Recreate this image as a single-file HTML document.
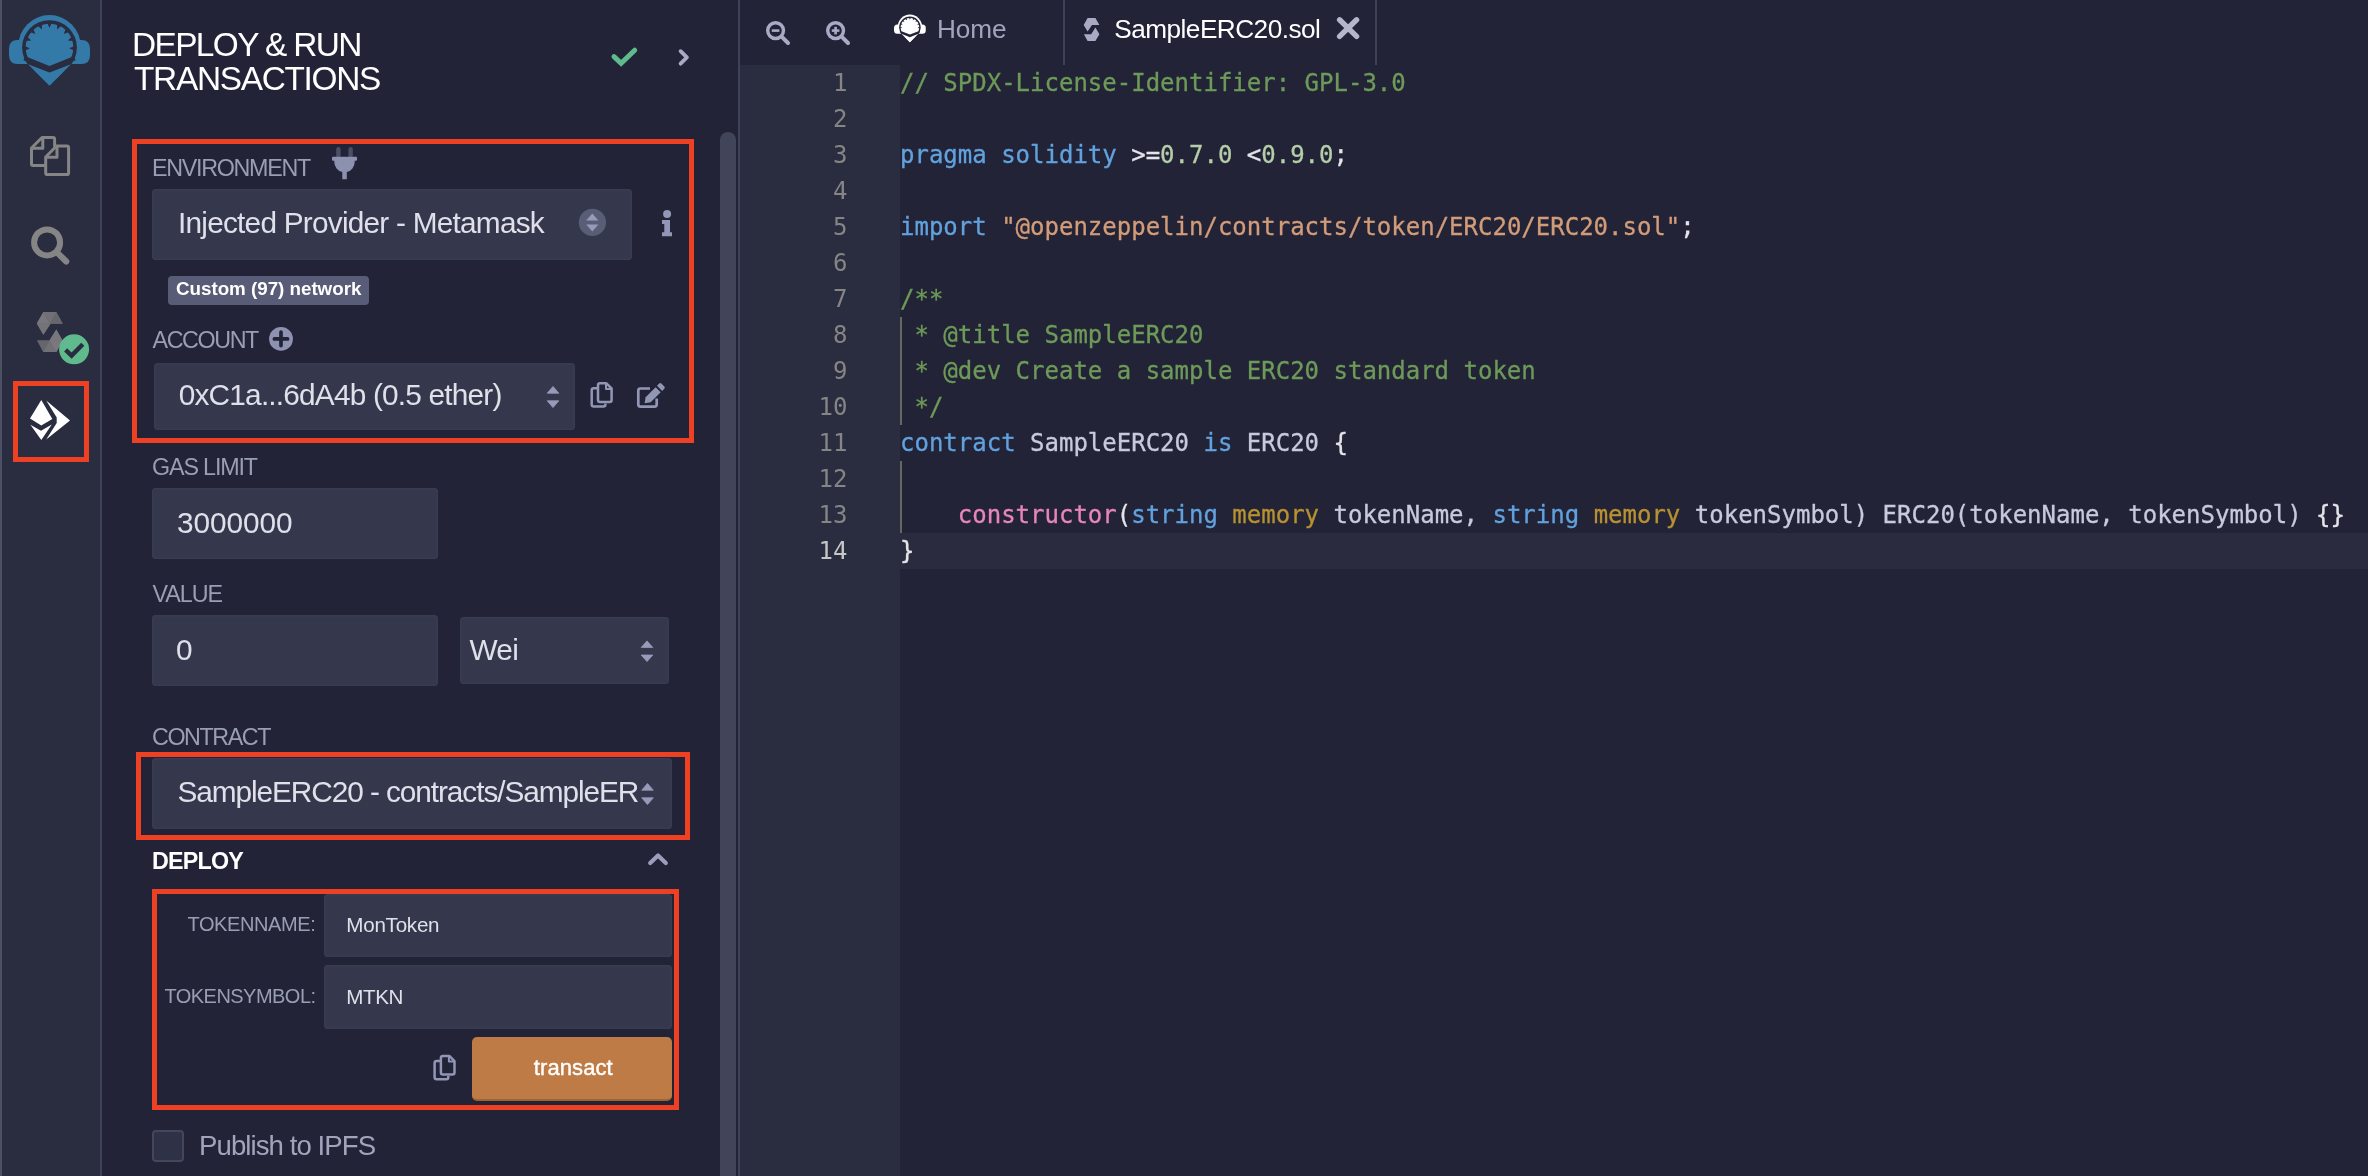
<!DOCTYPE html>
<html lang="en"><head><meta charset="utf-8"><title>Remix - Ethereum IDE</title>
<style>html,body{margin:0;padding:0}body{width:2368px;height:1176px;overflow:hidden;position:relative;background:#222336;}div,svg{box-sizing:content-box}#root{position:absolute;left:0;top:0;width:2368px;height:1176px;overflow:hidden;will-change:transform;-webkit-font-smoothing:antialiased}</style></head><body><div id="root">
<div style="position:absolute;left:0px;top:0px;width:2px;height:1176px;background:#4d4f62;"></div>
<div style="position:absolute;left:2px;top:0px;width:98px;height:1176px;background:#2a2c3f;"></div>
<div style="position:absolute;left:100px;top:0px;width:2px;height:1176px;background:#3e4257;"></div>
<div style="position:absolute;left:738px;top:0px;width:2px;height:1176px;background:#3e4257;"></div>
<div style="position:absolute;left:740px;top:65px;width:160px;height:1111px;background:#2a2c3f;"></div>
<div style="position:absolute;left:900px;top:533px;width:1468px;height:36px;background:#2a2b3f;"></div>
<svg style="position:absolute;left:0px;top:0px" width="102" height="480" viewBox="0 0 102 480"><clipPath id="hb"><rect x="0" y="0" width="100" height="56"/></clipPath><circle cx="49.5" cy="46.3" r="31.2" fill="#347aa8" clip-path="url(#hb)"/><path d="M25.5 40 H17.5 Q9 40 9 49 V55 Q9 64 17.5 64 H27 Z" fill="#347aa8"/><path d="M73.5 40 H81.5 Q90 40 90 49 V55 Q90 64 81.5 64 H72 Z" fill="#347aa8"/><path d="M26 62 L73 62 L49.5 85.4 Z" fill="#347aa8"/><circle cx="49.5" cy="47.6" r="27.4" fill="#2a2c3f"/><path d="M24.5 57.6 L49.5 68.2 L74.5 57.6" fill="none" stroke="#2a2c3f" stroke-width="5.6"/><path d="M28 64.2 L49.5 72.6 L71 64.2 L49.5 85.4 Z" fill="#347aa8"/><path d="M27.8 57.3 A23.8 23.8 0 1 1 71.2 57.3 L49.5 66 Z" fill="#347aa8"/><path d="M29.8 48.3 L25.1 46.3 L25.3 50.6 Z M31.1 40.5 L27.6 36.9 L26.0 40.9 Z M35.3 33.9 L33.5 29.2 L30.5 32.2 Z M41.8 29.5 L42.0 24.4 L38.0 26.1 Z M49.5 27.9 L51.6 23.3 L47.4 23.3 Z M57.2 29.5 L61.0 26.1 L57.0 24.4 Z M63.7 33.9 L68.5 32.2 L65.5 29.2 Z M67.9 40.5 L73.0 40.9 L71.4 36.9 Z M69.2 48.3 L73.7 50.6 L73.9 46.3 Z" fill="#2a2c3f"/><g fill="none" stroke="#858585" stroke-width="3" stroke-linejoin="round" stroke-linecap="round"><path d="M45 165.5 H33 Q31.5 165.5 31.5 164 V148 L42 137.5 H53 Q54.6 137.5 54.6 139 V146"/><path d="M42.8 138 V148.3 H32"/><path d="M56.5 146 H67 Q68.6 146 68.6 147.5 V173 Q68.6 174.6 67 174.6 H47.3 Q45.7 174.6 45.7 173 V157 Z"/><path d="M57 146.5 V157.2 H46.2"/></g><circle cx="47.1" cy="242.4" r="13" fill="none" stroke="#858585" stroke-width="6"/><path d="M57.2 252.6 L66.2 261.5" stroke="#858585" stroke-width="6.2" stroke-linecap="round"/><polygon points="43.3,312 56.3,312 62.8,323.7 50.6,323.7 43.3,334.8 36.8,323.4" fill="#6c6c72"/><polygon points="43.3,312 49.8,323.7 36.8,323.4" fill="#77777c"/><polygon points="43.3,312 56.3,312 49.8,323.7" fill="#707075"/><polygon points="56.3,312 62.8,323.7 49.8,323.7" fill="#66666b"/><polygon points="36.8,323.4 50.6,323.7 43.3,334.8" fill="#737378"/><polygon points="56.3,329.4 62.8,340.9 56.3,352 43.3,352 37.2,340.5 49.4,340.5" fill="#6c6c72"/><polygon points="56.3,329.4 62.8,340.9 49.4,340.5" fill="#77777c"/><polygon points="37.2,340.5 49.8,340.6 43.3,352" fill="#65656a"/><polygon points="49.8,340.6 56.3,352 43.3,352" fill="#707075"/><polygon points="49.8,340.6 62.8,340.9 56.3,352" fill="#78787d"/><circle cx="74.1" cy="349.3" r="15" fill="#5fba8d"/><path d="M65.6 349.9 L71.6 355.6 L82.8 344.3" fill="none" stroke="#2a2c3f" stroke-width="4.4"/><polygon points="41.3,400 52.3,419 41.3,425.5 30,418.6" fill="#fff"/><polygon points="30.4,424.7 41,430.8 51.8,424.4 41.3,440" fill="#fff"/><polygon points="46.2,400.4 70,420.4 46.2,439.6 56.7,423 56.7,417.6" fill="#fff"/></svg>
<div style="position:absolute;left:13px;top:381px;width:66px;height:71px;border:5px solid #ee4124;"></div>
<div style="position:absolute;left:132px;top:27.73px;font:400 33.4px/33.4px 'Liberation Sans', sans-serif;color:#fff;letter-spacing:-1.6px;white-space:pre;">DEPLOY &amp; RUN</div>
<div style="position:absolute;left:134px;top:62.23px;font:400 33.4px/33.4px 'Liberation Sans', sans-serif;color:#fff;letter-spacing:-1.3px;white-space:pre;">TRANSACTIONS</div>
<div style="position:absolute;left:720px;top:132px;width:16px;height:1068px;background:#424459;border-radius:8px;"></div>
<div style="position:absolute;left:132px;top:139px;width:552px;height:294px;border:5px solid #ee4124;"></div>
<div style="position:absolute;left:152px;top:156.68px;font:400 23.3px/23.3px 'Liberation Sans', sans-serif;color:#9a9eb4;letter-spacing:-1.29px;white-space:pre;">ENVIRONMENT</div>
<div style="position:absolute;left:152px;top:189px;width:480px;height:71px;background:#35384c;border-radius:4px;box-shadow:inset 0 0 0 1.5px #393c51;"></div>
<div style="position:absolute;left:178px;top:208.37px;font:400 29.8px/29.8px 'Liberation Sans', sans-serif;color:#dfe0ea;letter-spacing:-0.77px;white-space:pre;">Injected Provider - Metamask</div>
<div style="position:absolute;left:168px;top:276px;width:201px;height:28.5px;background:#595c76;border-radius:4px;"></div>
<div style="position:absolute;left:176px;top:280.49px;font:700 18.8px/18.8px 'Liberation Sans', sans-serif;color:#fff;letter-spacing:-0.02px;white-space:pre;">Custom (97) network</div>
<div style="position:absolute;left:152.5px;top:328.88px;font:400 23.3px/23.3px 'Liberation Sans', sans-serif;color:#9a9eb4;letter-spacing:-1.39px;white-space:pre;">ACCOUNT</div>
<div style="position:absolute;left:154px;top:363px;width:421px;height:66.5px;background:#35384c;border-radius:4px;box-shadow:inset 0 0 0 1.5px #393c51;"></div>
<div style="position:absolute;left:178.75px;top:379.77px;font:400 29.8px/29.8px 'Liberation Sans', sans-serif;color:#dfe0ea;letter-spacing:-0.8px;white-space:pre;">0xC1a...6dA4b (0.5 ether)</div>
<div style="position:absolute;left:152px;top:456.38px;font:400 23.3px/23.3px 'Liberation Sans', sans-serif;color:#9a9eb4;letter-spacing:-1.14px;white-space:pre;">GAS LIMIT</div>
<div style="position:absolute;left:152px;top:488px;width:286px;height:71px;background:#35384c;border-radius:4px;box-shadow:inset 0 0 0 1.5px #393c51;"></div>
<div style="position:absolute;left:177px;top:507.77px;font:400 29.8px/29.8px 'Liberation Sans', sans-serif;color:#dfe0ea;letter-spacing:-0.07px;white-space:pre;">3000000</div>
<div style="position:absolute;left:152.5px;top:582.88px;font:400 23.3px/23.3px 'Liberation Sans', sans-serif;color:#9a9eb4;letter-spacing:-1.03px;white-space:pre;">VALUE</div>
<div style="position:absolute;left:152px;top:615px;width:286px;height:70.5px;background:#35384c;border-radius:4px;box-shadow:inset 0 0 0 1.5px #393c51;"></div>
<div style="position:absolute;left:176px;top:634.77px;font:400 29.8px/29.8px 'Liberation Sans', sans-serif;color:#dfe0ea;letter-spacing:0px;white-space:pre;">0</div>
<div style="position:absolute;left:460px;top:617px;width:209px;height:67px;background:#35384c;border-radius:4px;box-shadow:inset 0 0 0 1.5px #393c51;"></div>
<div style="position:absolute;left:469.5px;top:634.77px;font:400 29.8px/29.8px 'Liberation Sans', sans-serif;color:#dfe0ea;letter-spacing:-0.76px;white-space:pre;">Wei</div>
<div style="position:absolute;left:152px;top:725.88px;font:400 23.3px/23.3px 'Liberation Sans', sans-serif;color:#9a9eb4;letter-spacing:-1.43px;white-space:pre;">CONTRACT</div>
<div style="position:absolute;left:136px;top:752px;width:544px;height:78px;border:5px solid #ee4124;"></div>
<div style="position:absolute;left:152px;top:758px;width:520px;height:71px;background:#35384c;border-radius:4px;box-shadow:inset 0 0 0 1.5px #393c51;"></div>
<div style="position:absolute;left:177.4px;top:777.37px;font:400 29.8px/29.8px 'Liberation Sans', sans-serif;color:#dfe0ea;letter-spacing:-1.07px;white-space:pre;">SampleERC20 - contracts/SampleER</div>
<div style="position:absolute;left:152px;top:849.58px;font:700 23.3px/23.3px 'Liberation Sans', sans-serif;color:#fff;letter-spacing:-0.8px;white-space:pre;">DEPLOY</div>
<div style="position:absolute;left:152px;top:889px;width:517px;height:211px;border:5px solid #ee4124;"></div>
<div style="position:absolute;right:2052.5px;top:913.77px;font:400 20px/20px 'Liberation Sans', sans-serif;color:#9a9eb4;letter-spacing:-0.38px;white-space:pre;">TOKENNAME:</div>
<div style="position:absolute;left:324px;top:894px;width:348px;height:63px;background:#35384c;border-radius:4px;box-shadow:inset 0 0 0 1.5px #393c51;"></div>
<div style="position:absolute;left:346.3px;top:914.56px;font:400 20.6px/20.6px 'Liberation Sans', sans-serif;color:#dfe0ea;letter-spacing:-0.25px;white-space:pre;">MonToken</div>
<div style="position:absolute;right:2052.5px;top:986.07px;font:400 20px/20px 'Liberation Sans', sans-serif;color:#9a9eb4;letter-spacing:-0.53px;white-space:pre;">TOKENSYMBOL:</div>
<div style="position:absolute;left:324px;top:965px;width:348px;height:64px;background:#35384c;border-radius:4px;box-shadow:inset 0 0 0 1.5px #393c51;"></div>
<div style="position:absolute;left:346.3px;top:986.56px;font:400 20.6px/20.6px 'Liberation Sans', sans-serif;color:#dfe0ea;letter-spacing:-0.45px;white-space:pre;">MTKN</div>
<div style="position:absolute;left:472px;top:1037px;width:200px;height:61.5px;background:#bf7b46;border-radius:5px;border-bottom:2px solid #a2622f;"></div>
<div style="position:absolute;left:533.8px;top:1057.38px;font:400 22px/22px 'Liberation Sans', sans-serif;color:#fff;letter-spacing:0.09px;white-space:pre;-webkit-text-stroke:0.4px #fff;">transact</div>
<div style="position:absolute;left:152px;top:1130px;width:28px;height:28px;border:2px solid #44475c;border-radius:4px;background:#2f3146"></div>
<div style="position:absolute;left:199px;top:1132.04px;font:400 27.6px/27.6px 'Liberation Sans', sans-serif;color:#a2a3bd;letter-spacing:-0.93px;white-space:pre;">Publish to IPFS</div>
<svg style="position:absolute;left:100px;top:0px" width="640" height="1176" viewBox="100 0 640 1176"><path d="M614 56.6 L621.1 63.4 L634.7 50.2" fill="none" stroke="#5fba8d" stroke-width="5" stroke-linecap="round" stroke-linejoin="miter"/><path d="M680.6 51.2 L686.9 57.4 L680.6 63.7" fill="none" stroke="#a9abc6" stroke-width="3.8" stroke-linecap="round" stroke-linejoin="round"/><rect x="336.2" y="147" width="4.4" height="11" rx="2.2" fill="#4b4e65"/><rect x="348.4" y="147" width="4.4" height="11" rx="2.2" fill="#4b4e65"/><path d="M333 156.8 H356 Q357 156.8 357 157.8 V159.8 Q357 160.8 356 160.8 H354.7 V162 A10.25 10.4 0 0 1 346.8 172.1 V179.2 H342.3 V172.1 A10.25 10.4 0 0 1 334.3 162 V160.8 H333 Q332 160.8 332 159.8 V157.8 Q332 156.8 333 156.8 Z" fill="#8d91b0"/><circle cx="592.4" cy="222.4" r="13.6" fill="#5a5d76"/><path d="M592.3 213.6 L598.4 220.6 H586.2 Z M586.2 224.6 H598.4 L592.3 231.4 Z" fill="#979bb9"/><circle cx="667.1" cy="213.9" r="4" fill="#9397b7"/><path d="M662 220 H670 V232.3 H672 V236.3 H662 V232.3 H664.3 V224 H662 Z" fill="#9397b7"/><circle cx="281" cy="338.9" r="11.9" fill="#8d92b1"/><path d="M274.4 338.9 H287.6 M281 332.2 V345.6" stroke="#222336" stroke-width="3.7" stroke-linecap="round"/><path d="M553 386.4 L558.8 393.2 H547.2 Z M547.2 400.8 H558.8 L553 407.6 Z" fill="#979bb9" stroke="#979bb9" stroke-width="0.8" stroke-linejoin="round"/><path d="M647 640.9 L652.8 647.45 H641.2 Z M641.2 655.05 H652.8 L647 661.6 Z" fill="#979bb9" stroke="#979bb9" stroke-width="0.8" stroke-linejoin="round"/><path d="M647.5 783.4 L653.3 790.2 H641.7 Z M641.7 797.8 H653.3 L647.5 804.6 Z" fill="#979bb9" stroke="#979bb9" stroke-width="0.8" stroke-linejoin="round"/><g transform="translate(590.4 382)" fill="none" stroke="#9296b5" stroke-width="2.5" stroke-linejoin="round"><path d="M15 21.5 V22.6 Q15 24.6 13 24.6 H3.3 Q1.3 24.6 1.3 22.6 V8.3 Q1.3 6.3 3.3 6.3 H7.6"/><path d="M9.6 1.3 H16 L21.2 6.5 V18 Q21.2 20 19.2 20 H9.6 Q7.6 20 7.6 18 V3.3 Q7.6 1.3 9.6 1.3 Z"/><path d="M15.6 1.8 V7 H20.8" stroke-width="2"/></g><g transform="translate(433.3 1054.6)" fill="none" stroke="#9296b5" stroke-width="2.5" stroke-linejoin="round"><path d="M15 21.5 V22.6 Q15 24.6 13 24.6 H3.3 Q1.3 24.6 1.3 22.6 V8.3 Q1.3 6.3 3.3 6.3 H7.6"/><path d="M9.6 1.3 H16 L21.2 6.5 V18 Q21.2 20 19.2 20 H9.6 Q7.6 20 7.6 18 V3.3 Q7.6 1.3 9.6 1.3 Z"/><path d="M15.6 1.8 V7 H20.8" stroke-width="2"/></g><g fill="none" stroke="#9296b5" stroke-width="2.7" stroke-linejoin="round"><path d="M656.7 398.5 V404.6 Q656.7 406.7 654.6 406.7 H640.4 Q638.3 406.7 638.3 404.6 V390.6 Q638.3 388.5 640.4 388.5 H650"/></g><path d="M644.6 403.3 L645.6 397.2 L655.6 387.2 L660.7 392.3 L650.7 402.3 Z" fill="#9296b5"/><path d="M657 385.8 L659.2 383.6 Q660.3 382.5 661.4 383.6 L664.3 386.5 Q665.4 387.6 664.3 388.7 L662.1 390.9 Z" fill="#9296b5"/><path d="M650.2 863 L658 855.4 L665.8 863" fill="none" stroke="#9a9dbb" stroke-width="4.2" stroke-linecap="round" stroke-linejoin="round"/></svg>
<div style="position:absolute;left:1063px;top:0px;width:2px;height:65px;background:#3e4257;"></div>
<div style="position:absolute;left:1375px;top:0px;width:2px;height:65px;background:#3e4257;"></div>
<div style="position:absolute;left:937px;top:15.82px;font:400 26.2px/26.2px 'Liberation Sans', sans-serif;color:#a2a3bd;letter-spacing:-0.1px;white-space:pre;">Home</div>
<div style="position:absolute;left:1114.3px;top:15.82px;font:400 26.2px/26.2px 'Liberation Sans', sans-serif;color:#fff;letter-spacing:-0.53px;white-space:pre;">SampleERC20.sol</div>
<svg style="position:absolute;left:740px;top:0px" width="700" height="66" viewBox="740 0 700 66"><circle cx="775.6" cy="30.6" r="7.9" fill="none" stroke="#a9abc6" stroke-width="3.4"/><path d="M781.6 36.6 L788 43" stroke="#a9abc6" stroke-width="4" stroke-linecap="round"/><path d="M771.8 30.6 H779.4" stroke="#a9abc6" stroke-width="2.6"/><circle cx="835.6" cy="30.6" r="7.9" fill="none" stroke="#a9abc6" stroke-width="3.4"/><path d="M841.6 36.6 L848 43" stroke="#a9abc6" stroke-width="4" stroke-linecap="round"/><path d="M831.8 30.6 H839.4" stroke="#a9abc6" stroke-width="2.6"/><path d="M835.6 26.8 V34.4" stroke="#a9abc6" stroke-width="2.6"/><g transform="translate(890.5 8.7) scale(0.392)"><clipPath id="hb2"><rect x="0" y="0" width="100" height="56"/></clipPath><circle cx="49.5" cy="46.3" r="31.2" fill="#fff" clip-path="url(#hb2)"/><path d="M25.5 40 H17.5 Q9 40 9 49 V55 Q9 64 17.5 64 H27 Z" fill="#fff"/><path d="M73.5 40 H81.5 Q90 40 90 49 V55 Q90 64 81.5 64 H72 Z" fill="#fff"/><path d="M26 62 L73 62 L49.5 85.4 Z" fill="#fff"/><circle cx="49.5" cy="47.6" r="27.4" fill="#222336"/><path d="M24.5 57.6 L49.5 68.2 L74.5 57.6" fill="none" stroke="#222336" stroke-width="5.6"/><path d="M28 64.2 L49.5 72.6 L71 64.2 L49.5 85.4 Z" fill="#fff"/><path d="M27.8 57.3 A23.8 23.8 0 1 1 71.2 57.3 L49.5 66 Z" fill="#fff"/><path d="M29.8 48.3 L25.1 46.3 L25.3 50.6 Z M31.1 40.5 L27.6 36.9 L26.0 40.9 Z M35.3 33.9 L33.5 29.2 L30.5 32.2 Z M41.8 29.5 L42.0 24.4 L38.0 26.1 Z M49.5 27.9 L51.6 23.3 L47.4 23.3 Z M57.2 29.5 L61.0 26.1 L57.0 24.4 Z M63.7 33.9 L68.5 32.2 L65.5 29.2 Z M67.9 40.5 L73.0 40.9 L71.4 36.9 Z M69.2 48.3 L73.7 50.6 L73.9 46.3 Z" fill="#222336"/></g><path d="M1087.6 18 H1095.4 L1099.4 25 H1092 L1087.6 31.6 L1083.7 24.9 Z" fill="#a9abc4"/><path d="M1095.4 27.6 L1099.4 34.2 L1095.4 41 H1087.6 L1083.9 34.2 H1091.2 Z" fill="#a9abc4"/><path d="M1339.6 19.8 L1356.6 36.4 M1356.6 19.8 L1339.6 36.4" stroke="#b5b6cc" stroke-width="5.4" stroke-linecap="round"/></svg>
<div style="position:absolute;left:900px;top:317px;width:2px;height:108px;background:#666663;"></div>
<div style="position:absolute;left:900px;top:461px;width:2px;height:72px;background:#666663;"></div>
<div style="position:absolute;left:900px;top:64.7px;font:24px/36px 'DejaVu Sans Mono', 'Liberation Mono', monospace;color:#c8c9dc;-webkit-text-stroke:0.3px currentColor">
<div style="height:36px;white-space:pre"><span style="color:#6d9a58">// SPDX-License-Identifier: GPL-3.0</span></div>
<div style="height:36px;white-space:pre"></div>
<div style="height:36px;white-space:pre"><span style="color:#61a2de">pragma solidity</span> <span style="color:#e4e4ea">&gt;=</span><span style="color:#b5cea8">0.7.0</span> <span style="color:#e4e4ea">&lt;</span><span style="color:#b5cea8">0.9.0</span><span style="color:#e4e4ea">;</span></div>
<div style="height:36px;white-space:pre"></div>
<div style="height:36px;white-space:pre"><span style="color:#61a2de">import</span> <span style="color:#d39c78">"@openzeppelin/contracts/token/ERC20/ERC20.sol"</span><span style="color:#e4e4ea">;</span></div>
<div style="height:36px;white-space:pre"></div>
<div style="height:36px;white-space:pre"><span style="color:#6d9a58">/**</span></div>
<div style="height:36px;white-space:pre"><span style="color:#6d9a58"> * @title SampleERC20</span></div>
<div style="height:36px;white-space:pre"><span style="color:#6d9a58"> * @dev Create a sample ERC20 standard token</span></div>
<div style="height:36px;white-space:pre"><span style="color:#6d9a58"> */</span></div>
<div style="height:36px;white-space:pre"><span style="color:#61a2de">contract</span> <span style="color:#c8c9dc">SampleERC20</span> <span style="color:#61a2de">is</span> <span style="color:#c8c9dc">ERC20</span> <span style="color:#e4e4ea">{</span></div>
<div style="height:36px;white-space:pre"></div>
<div style="height:36px;white-space:pre">    <span style="color:#e886b8">constructor</span><span style="color:#e4e4ea">(</span><span style="color:#61a2de">string</span> <span style="color:#b89130">memory</span> <span style="color:#c8c9dc">tokenName,</span> <span style="color:#61a2de">string</span> <span style="color:#b89130">memory</span> <span style="color:#c8c9dc">tokenSymbol) ERC20(tokenName, tokenSymbol)</span> <span style="color:#e4e4ea">{}</span></div>
<div style="height:36px;white-space:pre"><span style="color:#e4e4ea">}</span></div>
</div>
<div style="position:absolute;left:740px;top:64.7px;width:107.5px;text-align:right;font:24px/36px 'DejaVu Sans Mono', 'Liberation Mono', monospace;color:#858585">
<div style="height:36px">1</div>
<div style="height:36px">2</div>
<div style="height:36px">3</div>
<div style="height:36px">4</div>
<div style="height:36px">5</div>
<div style="height:36px">6</div>
<div style="height:36px">7</div>
<div style="height:36px">8</div>
<div style="height:36px">9</div>
<div style="height:36px">10</div>
<div style="height:36px">11</div>
<div style="height:36px">12</div>
<div style="height:36px">13</div>
<div style="height:36px;color:#c6c6c6">14</div>
</div>
</div></body></html>
